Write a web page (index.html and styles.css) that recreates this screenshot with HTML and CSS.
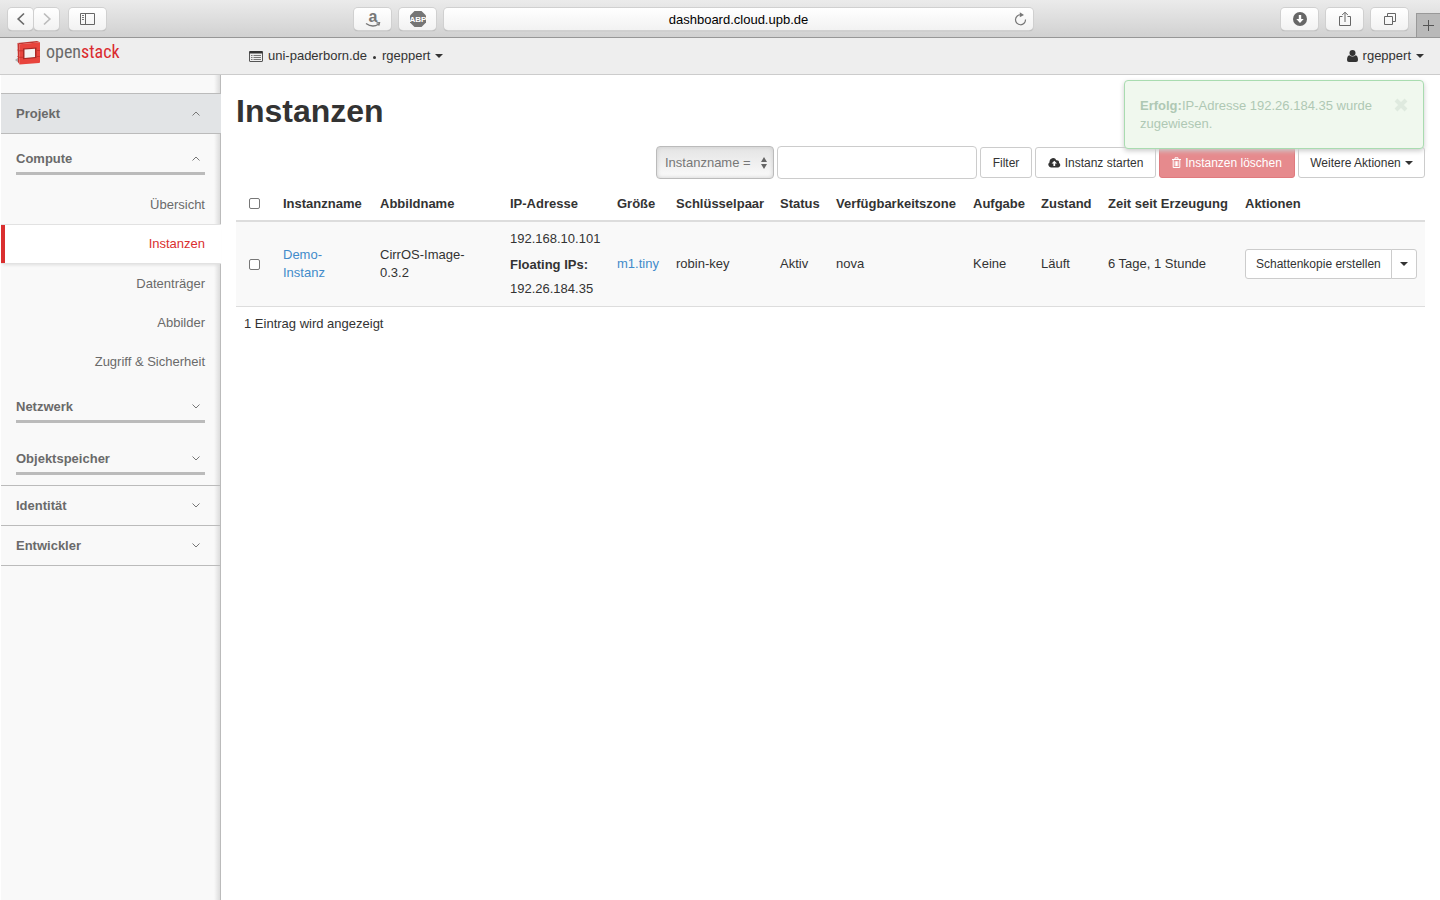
FILE: index.html
```html
<!DOCTYPE html>
<html lang="de">
<head>
<meta charset="utf-8">
<title>Instanzen - OpenStack Dashboard</title>
<link rel="stylesheet" href="styles.css">
</head>
<body>
<div class="browser">
  <div class="browser-nav">
    <div class="history">
      <button class="tool tool-narrow" aria-label="Zurück"><svg width="10" height="14" viewBox="0 0 10 14"><path d="M8 1.5 2.2 7 8 12.5" fill="none" stroke="#6a6a6a" stroke-width="1.7"/></svg></button>
      <button class="tool tool-narrow" aria-label="Vorwärts"><svg width="10" height="14" viewBox="0 0 10 14"><path d="M2 1.5 7.8 7 2 12.5" fill="none" stroke="#bcbcbc" stroke-width="1.7"/></svg></button>
    </div>
    <button class="tool" aria-label="Seitenleiste"><svg width="15" height="12" viewBox="0 0 15 12"><path d="M.5.5h14v11H.5zM5.5.5v11" fill="none" stroke="#666"/><path d="M2 2.5h2M2 4.5h2M2 6.5h2" stroke="#777"/></svg></button>
  </div>
  <div class="browser-center">
    <button class="tool" aria-label="Amazon"><svg width="16" height="22" viewBox="0 0 16 22"><text x="8" y="14" text-anchor="middle" class="amazon-a">a</text><path d="M1 15.500q6.500 4.600 12.500.7M11.500 15l3-.3-.7 2.900" fill="none" stroke="#777" stroke-width="1.300"/></svg></button>
    <button class="tool" aria-label="Adblock Plus"><svg width="18" height="18" viewBox="0 0 18 18"><path d="M5.500 1h7L17 5.500v7L12.500 17h-7L1 12.500v-7z" fill="#757575"/><text x="9" y="11.800" text-anchor="middle" class="abp">ABP</text></svg></button>
    <div class="address">
      <input type="text" value="dashboard.cloud.upb.de" aria-label="Adresse">
      <button class="reload" aria-label="Neu laden"><svg width="13" height="14" viewBox="0 0 13 14"><path d="M7 2.800A5 5 0 1 0 11.500 7.600" fill="none" stroke="#777" stroke-width="1.200"/><path d="M5.800.2v5L10 2.900z" fill="#777"/></svg></button>
    </div>
  </div>
  <div class="browser-actions">
    <button class="tool" aria-label="Downloads"><svg width="14" height="14" viewBox="0 0 14 14"><circle cx="7" cy="7" r="7" fill="#666"/><path d="M5.800 3h2.400v4h2.500L7 11 3.300 7h2.500z" fill="#fff"/></svg></button>
    <button class="tool" aria-label="Teilen"><svg width="12" height="16" viewBox="0 0 12 16"><path d="M3.500 5.500h-3v9h11v-9h-3M6 11V1.500M3.200 4 6 1.200 8.800 4" fill="none" stroke="#666"/></svg></button>
    <button class="tool" aria-label="Tabs"><svg width="12" height="12" viewBox="0 0 12 12"><path d="M.5 3.500h8v8h-8zM3.500 3.500v-3h8v8h-3" fill="none" stroke="#666"/></svg></button>
    <button class="new-tab" aria-label="Neuer Tab"><svg width="11" height="11" viewBox="0 0 11 11"><path d="M5.500 0v11M0 5.500h11" stroke="#555"/></svg></button>
  </div>
</div>

<header class="topbar">
  <a class="brand" href="#" aria-label="openstack">
    <svg width="26" height="26" viewBox="0 0 26 26"><path d="M0 21 4 18v6z" fill="#aaa"/><path d="M2.500 4 22 2l3 1.200L4.500 5.200z" fill="#c0332f"/><path d="M2.500 4l2 1V25.500L3 23z" fill="#c8322e"/><path d="M4.500 5.200 25 3.200V23q0 1-1 1.100L4.500 25.500z" fill="#e8443d"/><path d="M8 9.500 21.500 8.500V19L8 20.200z" fill="#a82825"/><path d="M9.500 10.500 20 9.800v8.200l-10.500 1z" fill="#f4f1f1"/><path d="M2.500 11l2 .8h3.500M2.500 17.500l2 .8h3.500M21.500 11.500H25M21.500 17.500H25" fill="none" stroke="#c8322e"/></svg>
    <span class="brand-text">open<b>stack</b></span>
  </a>
  <button class="context">
    <svg width="14" height="11" viewBox="0 0 14 11"><path d="M1 .5h12q.5 0 .5.500v9q0 .5-.5.500H1q-.5 0-.5-.5V1Q.5.500 1 .5z" fill="none" stroke="#555"/><path d="M.5 0h13v2.500H.5z" fill="#333"/><path d="M2 4.500h1.500M2 6.500h1.500M2 8.500h1.500M4.500 4.500H12M4.500 6.500H12M4.500 8.500H12" stroke="#777"/></svg>
    <span>uni-paderborn.de</span><span class="dot"></span><span>rgeppert</span><span class="caret"></span>
  </button>
  <button class="user">
    <svg width="11" height="12" viewBox="0 0 11 12"><circle cx="5.500" cy="3" r="3" fill="#333"/><path d="M2.300 5.200Q5.500 8 8.700 5.200 11 6 11 10q0 2-2 2H2Q0 12 0 10 0 6 2.300 5.200z" fill="#333"/></svg>
    <span>rgeppert</span><span class="caret"></span>
  </button>
</header>

<div class="layout">
  <nav class="sidebar">
    <section class="panel">
      <button class="panel-head is-open">Projekt<svg class="chev" width="8" height="5" viewBox="0 0 8 5"><path d="M.5 4.500 4 1l3.500 3.500"/></svg></button>
      <div class="groups">
        <div class="group">
          <button class="group-head">Compute<svg class="chev" width="8" height="5" viewBox="0 0 8 5"><path d="M.5 4.500 4 1l3.500 3.500"/></svg></button>
          <ul class="links">
            <li><a href="#">Übersicht</a></li>
            <li><a class="active" href="#">Instanzen</a></li>
            <li><a href="#">Datenträger</a></li>
            <li><a href="#">Abbilder</a></li>
            <li><a href="#">Zugriff &amp; Sicherheit</a></li>
          </ul>
        </div>
        <div class="group"><button class="group-head">Netzwerk<svg class="chev" width="8" height="5" viewBox="0 0 8 5"><path d="M.5.500 4 4 7.500.5"/></svg></button></div>
        <div class="group"><button class="group-head">Objektspeicher<svg class="chev" width="8" height="5" viewBox="0 0 8 5"><path d="M.5.500 4 4 7.500.5"/></svg></button></div>
      </div>
    </section>
    <section class="panel"><button class="panel-head">Identität<svg class="chev" width="8" height="5" viewBox="0 0 8 5"><path d="M.5.500 4 4 7.500.5"/></svg></button></section>
    <section class="panel"><button class="panel-head">Entwickler<svg class="chev" width="8" height="5" viewBox="0 0 8 5"><path d="M.5.500 4 4 7.500.5"/></svg></button></section>
  </nav>

  <main class="content">
    <h1>Instanzen</h1>
    <div class="actions">
      <div class="select">
        <select aria-label="Filterfeld"><option>Instanzname =</option></select>
        <svg width="6" height="12" viewBox="0 0 6 12"><path d="M3 0l3 5H0zM3 12 0 7h6z" fill="#666"/></svg>
      </div>
      <input class="filter" type="text" aria-label="Filter">
      <button class="btn btn-filter">Filter</button>
      <button class="btn btn-launch"><svg width="13" height="10" viewBox="0 0 13 10"><path d="M3 9.500A2.900 2.900 0 0 1 1.600 4.200 3.500 3.500 0 0 1 8.300 2.300 2.200 2.200 0 0 1 11 5a2.400 2.400 0 0 1-.8 4.500z" fill="#333"/><path d="M6.300 2.800 9 5.600H7.200V8H5.400V5.600H3.600z" fill="#fff"/></svg>Instanz starten</button>
      <button class="btn btn-danger"><svg width="9" height="11" viewBox="0 0 9 11"><path d="M0 2.500h9M3 2.500V.8h3v1.700M1.200 2.500v8h6.600v-8M3.200 4.200v5M4.500 4.200v5M5.800 4.200v5" fill="none" stroke="#fff"/></svg>Instanzen löschen</button>
      <button class="btn btn-more">Weitere Aktionen<span class="caret"></span></button>
    </div>
    <table>
      <colgroup><col class="c-check"><col class="c-name"><col class="c-image"><col class="c-ip"><col class="c-size"><col class="c-key"><col class="c-status"><col class="c-zone"><col class="c-task"><col class="c-state"><col class="c-time"><col class="c-actions"></colgroup>
      <thead>
        <tr><th class="check"><input type="checkbox" aria-label="Alle auswählen"></th><th>Instanzname</th><th>Abbildname</th><th>IP-Adresse</th><th>Größe</th><th>Schlüsselpaar</th><th>Status</th><th>Verfügbarkeitszone</th><th>Aufgabe</th><th>Zustand</th><th>Zeit seit Erzeugung</th><th>Aktionen</th></tr>
      </thead>
      <tbody>
        <tr>
          <td class="check"><input type="checkbox" aria-label="Demo-Instanz auswählen"></td>
          <td><a href="#">Demo-<br>Instanz</a></td>
          <td>CirrOS-Image-<br>0.3.2</td>
          <td class="ips"><div>192.168.10.101</div><b>Floating IPs:</b><div>192.26.184.35</div></td>
          <td><a href="#">m1.tiny</a></td>
          <td>robin-key</td><td>Aktiv</td><td>nova</td><td>Keine</td><td>Läuft</td><td>6 Tage, 1 Stunde</td>
          <td><div class="split"><button class="btn">Schattenkopie erstellen</button><button class="btn" aria-label="Weitere"><span class="caret"></span></button></div></td>
        </tr>
      </tbody>
    </table>
    <p class="count">1 Eintrag wird angezeigt</p>
    <div class="alert" role="status">
      <p><b>Erfolg:</b>IP-Adresse 192.26.184.35 wurde zugewiesen.</p>
      <button aria-label="Schließen"><svg width="14" height="14" viewBox="0 0 14 14"><path d="M2 2l10 10M12 2 2 12" stroke="#dfeadf" stroke-width="4"/></svg></button>
    </div>
  </main>
</div>
</body>
</html>
```
FILE: styles.css
```css
* { box-sizing: border-box; }
body {
  margin: 0;
  min-height: 100vh;
  display: flex;
  flex-direction: column;
  background: #fff;
  color: #333;
  font: 13px/18px "Liberation Sans", Arial, sans-serif;
}
button, input, select { font: inherit; color: inherit; margin: 0; }
button { background: none; border: 0; padding: 0; white-space: nowrap; }
svg { display: block; flex: none; }
h1, p, ul { margin: 0; padding: 0; }
ul { list-style: none; }
a { color: #428bca; text-decoration: none; }

.browser {
  display: flex;
  justify-content: space-between;
  height: 38px;
  padding-left: 8px;
  background: linear-gradient(#ebebeb, #d1d1d1);
  border-bottom: 1px solid #979797;
}
.browser-nav, .browser-center, .browser-actions { display: flex; padding-top: 8px; }
.browser-nav { gap: 10px; }
.browser-center { flex: 0 1 679px; gap: 8px; }
.browser-actions { gap: 8px; }
.history { display: flex; gap: 1px; }
.tool, .address {
  height: 22px;
  border-radius: 4px;
  background: linear-gradient(#fff, #f2f2f2);
  box-shadow: 0 0 0 1px #d0d0d0, 0 1px 1px #999;
}
.tool {
  display: flex;
  align-items: center;
  justify-content: center;
  width: 37px;
  flex: none;
}
.tool-narrow { width: 25px; }
.address { flex: 1; position: relative; }
.address input {
  width: 100%;
  height: 22px;
  border: 0;
  padding: 0;
  background: none;
  color: #000;
  font-size: 13px;
  text-align: center;
}
.reload { position: absolute; right: 6px; top: 4px; }
.amazon-a { font: bold 16px "Liberation Sans", sans-serif; fill: #777; }
.abp { font: bold 8px "Liberation Sans", sans-serif; fill: #fff; }
.new-tab {
  display: flex;
  align-items: center;
  justify-content: center;
  align-self: flex-end;
  width: 24px;
  height: 24px;
  background: #b9b9b9;
  border: solid #999;
  border-width: 1px 0 0 1px;
}

.topbar {
  display: flex;
  align-items: center;
  height: 37px;
  padding: 0 16px 0 15px;
  background: #eee;
  border-bottom: 1px solid #ccc;
}
.brand { display: flex; align-items: center; gap: 5px; width: 234px; height: 28px; align-self: flex-start; }
.brand-text { font: 18px/24px "Roboto Condensed", "Open Sans Condensed", sans-serif; color: #6a6a6a; }
.brand-text b { font-weight: inherit; color: #da2a2e; }
.context, .user { display: flex; align-items: center; gap: 5px; }
.user { margin-left: auto; }
.dot { width: 3px; height: 3px; border-radius: 50%; background: #333; margin: 2px 1px 0; }
.caret { display: inline-block; border: 4px solid transparent; border-top-color: #333; border-bottom: 0; vertical-align: middle; }

.layout { display: flex; flex: 1; }
.sidebar {
  flex: none;
  width: 220px;
  margin-left: 1px;
  padding-top: 18px;
  background: linear-gradient(to left, #dcdcdc, #f9f9f9 6px);
  border-right: 1px solid #bbb;
  color: #6a6a6a;
}
.panel { border-top: 1px solid #bbb; margin-right: -1px; }
.panel:last-child { border-bottom: 1px solid #bbb; }
.panel-head, .group-head {
  display: flex;
  align-items: center;
  justify-content: space-between;
  width: 100%;
  font-weight: bold;
}
.panel-head { height: 39px; padding: 0 21px 0 15px; }
.panel-head.is-open { background: #e2e4e6; }
.groups { border-top: 1px solid #bbb; }
.group { padding: 16px 0 10px; }
.group:first-child { padding: 15px 0 0; }
.group-head {
  width: 189px;
  height: 26px;
  align-items: flex-start;
  margin: 0 16px 0 15px;
  border-bottom: 3px solid #bbb;
  padding: 1px 5px 0 0;
}
.chev { fill: none; stroke: #777; }
.group-head .chev { margin-top: 6px; }
.links { padding-top: 10px; text-align: right; }
.links a { display: block; padding: 0 16px; line-height: 39px; color: #6a6a6a; }
.links .active {
  background: #fff;
  border: solid #e2e2e2;
  border-width: 1px 0;
  box-shadow: inset 4px 0 #da2f2f, 0 3px 3px -2px #ddd;
  color: #da2f2f;
  line-height: 38px;
}

.content { position: relative; flex: 1; min-width: 0; padding: 16px 15px; }
h1 { font-size: 32px; line-height: 40px; }
.actions { display: flex; justify-content: flex-end; align-items: center; gap: 3px; padding: 15px 0 8px; }
.select { position: relative; width: 118px; }
.select select {
  appearance: none;
  width: 100%;
  height: 33px;
  padding: 0 8px;
  border: 1px solid #bbb;
  border-radius: 4px;
  background: linear-gradient(#e4e4e4, #fafafa);
  box-shadow: inset 0 0 4px #ccc;
  color: #777;
}
.select svg { position: absolute; right: 7px; top: 11px; }
.filter { width: 200px; height: 33px; border: 1px solid #ccc; border-radius: 4px; padding: 0 8px; }
.btn {
  display: flex;
  align-items: center;
  justify-content: center;
  gap: 4px;
  height: 31px;
  padding: 0 10px;
  border: 1px solid #ccc;
  border-radius: 3px;
  background: #fff;
  font-size: 12px;
}
.btn-filter { width: 52px; }
.btn-launch { width: 121px; }
.btn-danger { width: 136px; background: #e68a8d; border-color: #e07a7e; color: #fff; }
.btn-more { width: 127px; }

table { width: 100%; table-layout: fixed; border-collapse: separate; border-spacing: 0; }
.c-check { width: 39px; }
.c-name { width: 97px; }
.c-image { width: 130px; }
.c-ip { width: 107px; }
.c-size { width: 59px; }
.c-key { width: 104px; }
.c-status { width: 56px; }
.c-zone { width: 137px; }
.c-task { width: 68px; }
.c-state { width: 67px; }
.c-time { width: 137px; }
.c-actions { width: 188px; }
th, td { padding: 8px; text-align: left; white-space: nowrap; }
th { padding-bottom: 7px; border-bottom: 2px solid #ddd; }
td { background: #f9f9f9; border-bottom: 1px solid #ddd; }
.check { padding: 0 0 0 13px; }
input[type="checkbox"] {
  appearance: none;
  display: block;
  width: 11px;
  height: 11px;
  border: 1px solid #777;
  border-radius: 2px;
  background: #fff;
}
.ips b { display: block; margin: 8px 0 6px; }
.split { display: flex; }
.split .btn { height: 30px; border-radius: 3px 0 0 3px; }
.split .btn + .btn { width: 26px; padding: 0; margin-left: -1px; border-radius: 0 3px 3px 0; }
.count { padding: 8px; }

.alert {
  position: absolute;
  top: 5px;
  right: 16px;
  display: flex;
  width: 300px;
  height: 69px;
  padding: 16px 15px;
  border: 1px solid #a9dcb0;
  border-radius: 4px;
  background: #f0f8ee;
  box-shadow: 0 2px 5px #ccc;
  color: #afc8b4;
}
.alert p { flex: 1; }
.alert button { align-self: flex-start; margin-top: 1px; }
```
